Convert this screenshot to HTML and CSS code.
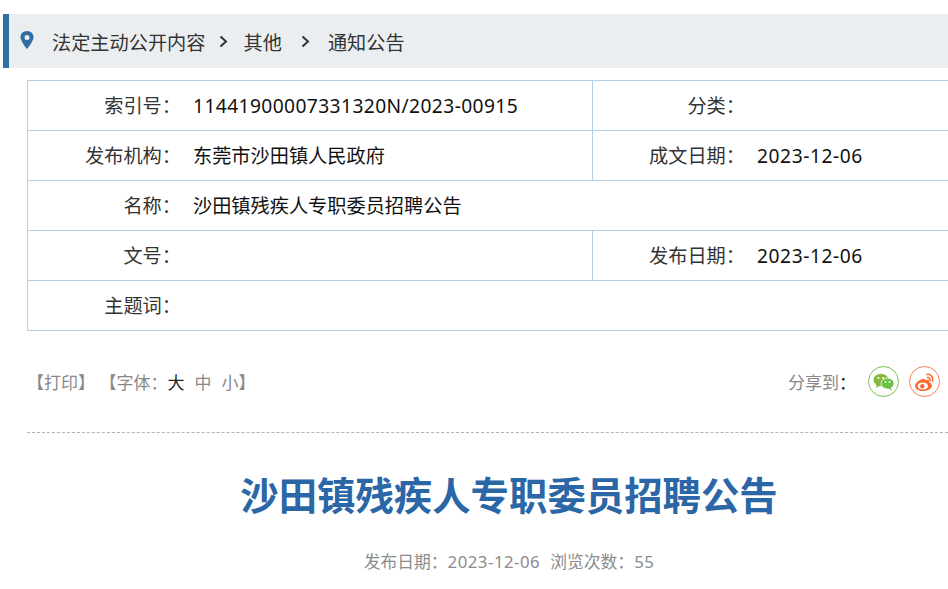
FILE: index.html
```html
<!DOCTYPE html>
<html lang="zh-CN">
<head>
<meta charset="utf-8">
<title>沙田镇残疾人专职委员招聘公告</title>
<link rel="stylesheet" href="styles.css">
</head>
<body>
<nav class="crumb">
  <svg class="pin" width="14" height="18" viewBox="0 0 14 18"><path fill-rule="evenodd" fill="#2f6da4" d="M7 0C3 0 .5 2.900.5 6.200.5 10.300 7 18 7 18s6.500-7.700 6.500-11.800C13.500 2.900 11 0 7 0zm0 4a2.500 2.500 0 1 1 0 5 2.500 2.500 0 0 1 0-5z"/></svg>
  <span>法定主动公开内容</span>
  <svg class="chev c-a" width="9" height="13" viewBox="0 0 9 13"><path d="M1.500 1.500l5.500 5-5.500 5" fill="none" stroke="#333" stroke-width="2"/></svg>
  <span>其他</span>
  <svg class="chev c-b" width="9" height="13" viewBox="0 0 9 13"><path d="M1.500 1.500l5.500 5-5.500 5" fill="none" stroke="#333" stroke-width="2"/></svg>
  <span>通知公告</span>
</nav>
<div class="meta">
  <div class="row">
    <div class="lab">索引号：</div><div class="val wide id">11441900007331320N/2023-00915</div>
    <div class="lab lab2">分类：</div><div class="val"></div>
  </div>
  <div class="row">
    <div class="lab">发布机构：</div><div class="val wide">东莞市沙田镇人民政府</div>
    <div class="lab lab2">成文日期：</div><div class="val num">2023-12-06</div>
  </div>
  <div class="row">
    <div class="lab">名称：</div><div class="val">沙田镇残疾人专职委员招聘公告</div>
  </div>
  <div class="row">
    <div class="lab">文号：</div><div class="val wide"></div>
    <div class="lab lab2">发布日期：</div><div class="val num">2023-12-06</div>
  </div>
  <div class="row last">
    <div class="lab">主题词：</div><div class="val"></div>
  </div>
</div>
<div class="tools">
  <div class="left">【打印】 【字体：<span class="on">大</span><span class="sz">中</span><span class="sz">小</span>】</div>
  <div class="share">
    <span class="share-t">分享到<i>：</i></span>
    <span class="ico wx"><svg width="22" height="18" viewBox="0 0 22 18"><ellipse cx="8" cy="7" rx="7.500" ry="6.300" fill="#86b83c"/><path d="M4 11l-1 4 4-2.500z" fill="#86b83c"/><ellipse cx="14.500" cy="10.500" rx="6.500" ry="5.500" fill="#6cc04a" stroke="#fff" stroke-width=".8"/><path d="M17.500 14.500l1.500 3-4-2z" fill="#6cc04a"/><circle cx="5.500" cy="5" r="1" fill="#fff"/><circle cx="10" cy="5" r="1" fill="#fff"/><circle cx="12.500" cy="9" r=".9" fill="#fff"/><circle cx="16.500" cy="9" r=".9" fill="#fff"/></svg></span>
    <span class="ico wb"><svg width="22" height="20" viewBox="0 0 22 20"><path d="M8.500 7C4.500 8 1 11.500 1 14c0 3 4 5 8 5 5 0 9-2.500 9-5.500 0-2-2.200-2.700-2.700-2.900.5-1.400.2-2.400-1-2.700-1.200-.2-3 .6-3.300.7.300-1.100 0-2.200-2.500-1.600z" fill="#fb6a2c"/><ellipse cx="8.800" cy="14" rx="5.300" ry="3.500" fill="#fff"/><circle cx="8.300" cy="14.200" r="2.200" fill="#fb6a2c"/><path d="M13 2.500c3.500-.8 6.800 2.400 5.500 6.500M13.500 5.500c1.800-.4 3 1.300 2.500 3" fill="none" stroke="#fb6a2c" stroke-width="1.500" stroke-linecap="round"/></svg></span>
  </div>
</div>
<h1 class="title">沙田镇残疾人专职委员招聘公告</h1>
<p class="info"><span>发布日期：<span class="num">2023-12-06</span></span><span>浏览次数：<span class="num">55</span></span></p>
</body>
</html>
```
FILE: styles.css
```css
html, body { margin: 0; padding: 0; }
html { overflow: hidden; }
body {
  width: 948px;
  height: 589px;
  overflow: hidden;
  background: #fff;
  font-family: "Noto Sans", "Noto Sans CJK SC", sans-serif;
  font-size: 19.2px;
  color: #333;
  padding-top: 14px;
  box-sizing: border-box;
}
.crumb {
  margin-left: 3px;
  height: 54px;
  border-left: 6px solid #2f6da4;
  background: #ebeef1;
  display: flex;
  align-items: center;
  padding-left: 11px;
  padding-top: 1px;
  box-sizing: border-box;
  white-space: nowrap;
  color: #333;
}
.pin { margin-right: 18px; margin-top: -3px; }
.c-a { margin: 0 16px 0 13px; }
.c-b { margin: 0 18px 0 19px; }
.meta {
  margin: 12px 0 0 27px;
  width: 960px;
  border: 1px solid #b0cfe8;
  box-sizing: border-box;
}
.row {
  display: flex;
  height: 50px;
  border-bottom: 1px solid #b0cfe8;
  box-sizing: border-box;
  line-height: 50px;
  color: #111;
}
.row.last { border-bottom: 0; height: 49px; }
.lab { width: 153px; text-align: right; color: #333; flex: none; box-sizing: border-box; }
.lab2 { border-left: 1px solid #b0cfe8; }
.val { padding-left: 12px; white-space: nowrap; }
.wide { width: 411px; flex: none; box-sizing: border-box; }
.id { letter-spacing: .41px; }
.num { letter-spacing: .03em; }
.tools {
  margin: 0 0 0 27px;
  height: 102px;
  width: 921px;
  border-bottom: 1px dashed #b3b3b3;
  box-sizing: border-box;
  display: flex;
  justify-content: space-between;
  align-items: center;
  color: #888;
  font-size: 17px;
}
.left { white-space: pre; }
.on { color: #222; }
.sz { margin-left: 10px; }
.share { display: flex; align-items: center; padding-right: 8px; }
.share-t { margin-right: 12px; }
.share-t i { font-style: normal; color: #222; }
.ico {
  width: 31px;
  height: 31px;
  border-radius: 50%;
  box-sizing: border-box;
  border: 1px solid;
  display: flex;
  align-items: center;
  justify-content: center;
}
.wx { border-color: #7cc24e; margin-right: 10px; }
.wb { border-color: #f9825a; }
.title {
  margin: 37px 0 0 70px;
  text-align: center;
  font-size: 38.4px;
  line-height: 50px;
  font-weight: 700;
  color: #2b66a6;
}
.info {
  margin: 30px 0 0 70px;
  text-align: center;
  font-size: 16.8px;
  line-height: 24px;
  color: #8c8c8c;
}
.info > span + span { margin-left: 10px; }
```
